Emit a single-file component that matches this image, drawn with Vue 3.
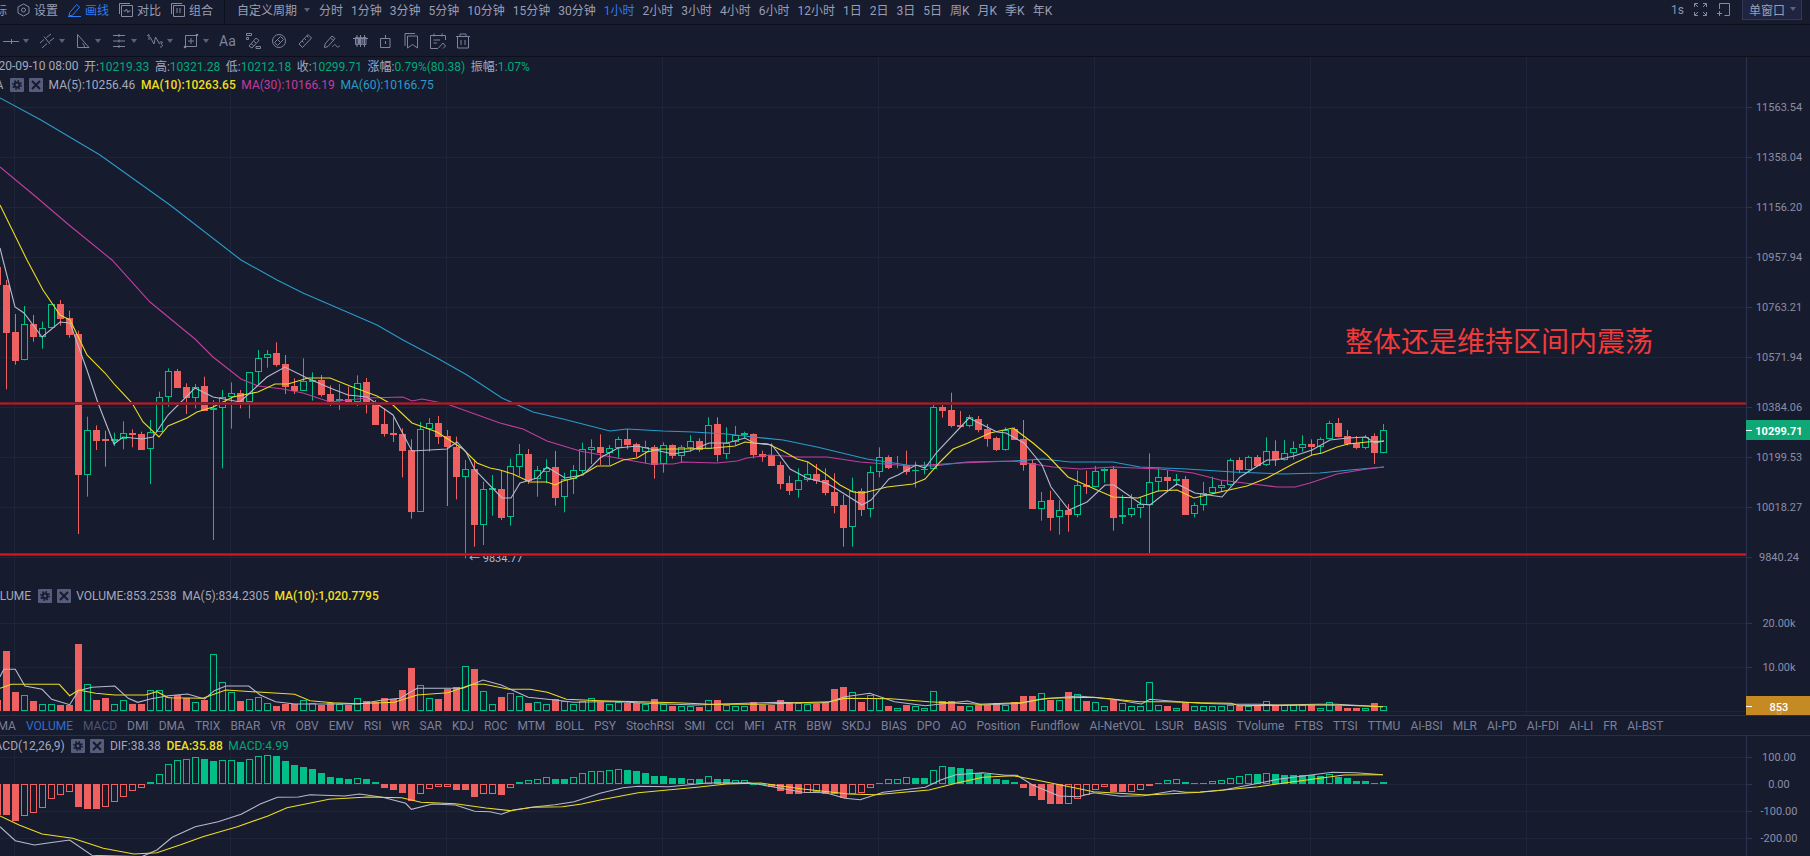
<script setup>
const periodList = ['分时', '1分钟', '3分钟', '5分钟', '10分钟', '15分钟', '30分钟', '1小时', '2小时', '3小时', '4小时', '6小时', '12小时', '1日', '2日', '3日', '5日', '周K', '月K', '季K', '年K'];
const indicatorList = ['MA', 'VOLUME', 'MACD', 'DMI', 'DMA', 'TRIX', 'BRAR', 'VR', 'OBV', 'EMV', 'RSI', 'WR', 'SAR', 'KDJ', 'ROC', 'MTM', 'BOLL', 'PSY', 'StochRSI', 'SMI', 'CCI', 'MFI', 'ATR', 'BBW', 'SKDJ', 'BIAS', 'DPO', 'AO', 'Position', 'Fundflow', 'AI-NetVOL', 'LSUR', 'BASIS', 'TVolume', 'FTBS', 'TTSI', 'TTMU', 'AI-BSI', 'MLR', 'AI-PD', 'AI-FDI', 'AI-LI', 'FR', 'AI-BST'];

const ohlc = [
  { label: '开', value: '10219.33' },
  { label: '高', value: '10321.28' },
  { label: '低', value: '10212.18' },
  { label: '收', value: '10299.71' },
  { label: '涨幅', value: '0.79%(80.38)' },
  { label: '振幅', value: '1.07%' },
];

const gridX = [14.5, 230.5, 446.5, 662.5, 878.5, 1094.5, 1310.5, 1526.5];
const priceTicks = [
  [107, '11563.54'], [157, '11358.04'], [207, '11156.20'], [257, '10957.94'], [307, '10763.21'],
  [357, '10571.94'], [407, '10384.06'], [457, '10199.53'], [507, '10018.27'], [557, '9840.24'],
];
const volumeTicks = [[623, '20.00k'], [667, '10.00k']];
const macdTicks = [[757, '100.00'], [784, '0.00'], [811, '-100.00'], [838, '-200.00']];

const barX = (i) => 6.5 + 9 * i;

// [kind, bodyTop, bodyBottom, wickTop, wickBottom], y read off the chart in 3x units
const candleGroups = [
  { from: -1, y0: 260, rows: [
    ['r',22,75,0,75],['r',75,218,60,388],['r',216,302,162,314],['g',193,301,138,301],['r',192,230,165,245],['g',205,230,185,266],
    ['g',133,205,133,205],['r',133,177,120,197],['r',175,224,152,233],['r',222,644,212,822],['g',511,644,470,710],['r',511,543,496,570],
    ['r',538,542,512,620],['f',537,543,518,558],['g',520,538,484,568],['r',520,524,508,562],['r',522,570,515,570],['g',515,568,480,672],
    ['g',412,515,395,515],['g',334,412,325,440],['r',333,384,327,384],['r',381,414,370,462],['g',380,413,372,445],['r',378,452,350,452],
    ['g',445,451,420,840],['g',410,445,390,625],['g',400,410,367,506],['r',400,425,390,445],['g',337,425,337,475],['g',295,337,270,375],
    ['g',281,295,270,323],['r',279,315,247,320],['r',312,380,285,402],['r',378,393,355,402],['g',364,392,295,392],['f',361,365,337,422],
    ['r',361,405,345,410],['r',402,425,376,438],['f',418,422,372,450],['r',417,428,380,430],['g',368,427,346,438],['r',366,426,354,460],
    ['r',425,494,420,494],['r',492,522,445,530],['r',519,524,472,546],['r',522,572,505,652],['r',570,755,538,776],['g',508,755,486,755],
    ['g',490,508,474,575],['r',489,530,468,552],['r',529,560,510,738],['r',560,650,530,718],
  ] },
  { from: 51, y0: 380, rows: [
    ['g',268,290,240,535],['r',268,434,238,500],['g',328,434,305,495],['f',323,329,285,407],['r',327,414,272,420],['g',259,412,236,437],
    ['g',223,260,192,288],['r',222,303,207,312],['g',271,298,258,350],['g',263,275,238,310],['r',261,353,213,377],['g',298,352,278,397],
    ['g',271,298,255,342],['g',208,272,188,280],['g',202,209,178,252],['r',201,219,163,255],['g',205,218,195,255],['g',178,205,170,235],
    ['r',177,195,148,208],['r',192,216,188,232],['g',202,215,182,250],['r',201,254,195,296],['g',196,252,187,278],['r',195,227,193,236],
    ['g',202,227,195,248],['g',184,203,166,215],['r',183,210,175,216],['g',134,208,112,208],['r',132,224,112,245],['g',188,223,142,237],
    ['g',164,186,138,195],['f',160,164,155,175],['r',162,224,160,235],['r',222,230,212,245],['r',226,257,190,257],['r',255,311,245,328],
    ['r',309,332,287,345],['g',301,331,265,353],['g',283,300,245,305],['r',282,303,252,312],['r',300,338,265,346],['r',336,377,280,400],
    ['r',375,443,345,500],['g',334,442,293,500],['r',334,389,325,408],['g',277,388,258,412],['g',232,277,202,292],['r',231,263,226,267],
    ['g',257,262,228,265],['r',255,275,212,284],['f',270,274,245,323],['f',267,271,245,283],['g',82,267,72,267],['r',81,92,68,113],
    ['r',90,137,38,142],['r',135,140,93,142],['g',112,139,105,142],['r',117,150,108,157],['r',148,176,132,200],['r',175,210,170,213],
    ['g',149,209,142,212],['r',148,180,142,180],['r',177,254,120,272],['r',250,386,240,386],['g',362,386,336,422],['r',360,413,332,452],
    ['g',391,412,360,464],['r',390,404,372,455],['g',316,404,272,412],['r',314,320,272,342],['g',274,320,258,322],['g',268,274,265,308],
    ['r',267,413,258,452],['g',405,412,345,432],['g',385,406,342,412],['g',373,385,352,414],['g',307,374,220,520],['g',292,307,262,335],
    ['r',291,303,272,332],['f',298,302,282,318],['r',297,405,288,405],['g',376,403,368,412],['g',338,376,306,392],['g',322,338,290,340],
    ['g',316,323,302,335],['g',241,316,235,318],['r',240,270,232,280],['g',232,269,227,272],['r',231,258,225,260],['g',214,256,172,258],
    ['r',213,241,181,258],['g',220,241,180,242],['g',205,220,184,238],['g',193,205,166,215],['r',192,200,178,225],['g',176,200,172,222],
    ['g',130,176,122,178],['r',129,170,114,172],['r',168,192,150,196],['r',190,204,168,208],['g',170,203,165,208],['r',168,218,160,252],
    ['g',151,218,132,220],
  ] },
];

const candles = candleGroups.flatMap(({ from, y0, rows }) =>
  rows.map(([kind, top, bottom, wickTop, wickBottom], i) => {
    const y1 = Math.round(y0 + top / 3);
    const y2 = Math.round(y0 + bottom / 3);
    return {
      id: from + i,
      kind,
      x: barX(from + i),
      y1,
      y2: Math.max(y2, y1 + 1),
      wickTop: y0 + wickTop / 3,
      wickBottom: y0 + wickBottom / 3,
    };
  }),
);

const ma60 = [[0,98],[41,120],[100,155],[170,205],[241,260],[277,280],[303,293],[347,312],[377,325],[403,340],[437,358],[467,375],[502,398],[533,412],[563,419],[610,431],[627,429],[663,431],[693,432],[727,434],[753,437],[783,440],[817,447],[867,459],[907,465],[933,466],[967,462],[1013,461],[1043,459],[1070,462],[1113,462],[1140,467],[1187,469],[1233,472],[1283,474],[1320,473],[1350,470],[1384,467]];
const ma30 = [[0,167],[35,196],[69,225],[112,260],[150,302],[195,339],[213,357],[241,379],[258,386],[283,389],[303,393],[330,402],[367,398],[403,397],[412,401],[422,399],[447,404],[500,423],[523,429],[547,441],[580,451],[617,458],[650,464],[673,464],[683,462],[717,463],[737,461],[747,458],[770,455],[797,457],[827,457],[860,462],[910,466],[960,463],[1013,461],[1053,467],[1080,469],[1113,467],[1160,469],[1193,473],[1220,480],[1253,484],[1277,487],[1295,487],[1310,483],[1337,474],[1367,469],[1384,467]];
const ma10 = [[0,205],[27,260],[43,290],[60,315],[70,320],[87,355],[105,373],[115,385],[132,403],[143,422],[159,437],[168,426],[187,418],[197,412],[213,407],[233,397],[258,392],[275,384],[288,384],[308,378],[330,378],[350,386],[377,396],[393,405],[412,423],[437,432],[463,449],[477,463],[490,468],[500,470],[513,474],[530,482],[547,482],[555,485],[563,481],[575,478],[587,472],[597,466],[610,466],[623,460],[637,458],[647,452],[660,449],[683,449],[713,448],[735,446],[745,442],[753,443],[768,444],[783,451],[797,459],[808,462],[827,475],[840,485],[853,492],[863,493],[887,487],[913,484],[925,479],[940,462],[953,449],[968,443],[990,433],[1013,428],[1033,443],[1047,455],[1068,477],[1097,490],[1113,497],[1138,498],[1158,491],[1177,490],[1194,498],[1220,492],[1247,486],[1267,478],[1293,464],[1312,455],[1322,453],[1337,447],[1348,444],[1367,442],[1384,441]];
const ma5 = [[0,248],[3,260],[15,307],[24,313],[42,337],[60,322],[70,323],[87,370],[98,403],[114,444],[123,437],[142,439],[153,437],[168,415],[195,388],[213,397],[240,402],[267,377],[285,367],[307,378],[330,388],[348,395],[367,397],[393,415],[412,451],[447,449],[457,442],[466,452],[475,470],[502,498],[511,498],[520,483],[537,478],[547,467],[565,478],[583,475],[600,458],[618,448],[637,446],[655,450],[673,454],[690,451],[709,443],[727,443],[745,438],[754,443],[772,445],[790,469],[807,478],[826,483],[835,488],[862,505],[871,500],[889,479],[898,475],[916,465],[925,468],[937,452],[969,418],[997,432],[1006,433],[1015,438],[1024,443],[1042,465],[1051,487],[1069,510],[1087,502],[1105,485],[1114,485],[1141,504],[1150,505],[1177,484],[1195,493],[1222,497],[1240,477],[1267,460],[1276,460],[1294,456],[1312,450],[1330,440],[1348,438],[1366,437],[1375,443],[1384,441]];

// pairs measured on crops of the chart: scale x, origin x, origin y
const crop = (pairs, sx, ox, oy) => pairs.map(([x, y]) => [ox + x / sx, oy + y / 3]);
const toPoints = (pairs) => pairs.map(([x, y]) => `${x.toFixed(1)},${y.toFixed(1)}`).join(' ');

const volumeWhite = [
  ...crop([[0,290],[10,268],[40,268],[65,318],[110,328],[135,358],[182,374],[205,332],[240,322],[300,318],[335,355],[360,367],[395,356],[440,347],[490,342],[535,357],[560,332],[590,318],[650,318],[680,345],[720,365],[770,372],[830,372],[940,372],[1000,360],[1045,355],[1090,325],[1170,325],[1210,325],[1262,300],[1310,315],[1380,352],[1450,360],[1500,367],[1568,365]], 2.613, 0, 580),
  ...crop([[50,185],[120,190],[250,195],[380,190],[470,187],[570,190],[600,185],[640,170],[705,160],[770,185],[850,197],[960,183],[1000,195],[1100,190],[1150,178],[1250,168],[1340,178],[1415,192],[1437,178],[1530,187],[1568,190]], 2.613, 600, 640),
  ...crop([[80,193],[150,193],[200,195],[300,193],[350,193],[470,200]], 2.57, 1200, 640),
];
const volumeYellow = [
  ...crop([[0,325],[30,313],[155,313],[182,347],[205,330],[250,340],[300,345],[380,345],[410,335],[440,353],[530,355],[590,330],[660,335],[770,343],[810,362],[870,368],[930,371],[1030,367],[1090,345],[1170,338],[1235,313],[1265,313],[1330,328],[1385,328],[1430,337],[1480,358],[1568,362]], 2.613, 0, 580),
  ...crop([[200,188],[290,193],[420,193],[520,188],[600,185],[640,175],[760,176],[860,185],[990,193],[1100,188],[1170,175],[1290,172],[1410,185],[1480,185],[1568,188]], 2.613, 600, 640),
  ...crop([[80,190],[100,197],[290,195],[370,196],[470,200]], 2.57, 1200, 640),
];
const macdWhite = [
  ...crop([[0,740],[40,782],[90,795],[130,788],[182,780],[240,826],[370,830],[410,810],[450,772],[510,740],[570,725],[630,703],[680,672],[725,652],[780,651],[810,644],[900,648],[940,642],[1000,652],[1060,670],[1075,688],[1130,672],[1190,675],[1240,694],[1280,695],[1310,703],[1340,690],[1400,680],[1450,674],[1500,665],[1568,640]], 2.613, 0, 580),
  ...crop([[60,443],[100,439],[180,440],[280,429],[390,428],[450,440],[530,457],[590,458],[640,475],[680,479],[740,457],[850,442],[890,420],[930,404],[1000,398],[1060,406],[1090,406],[1130,435],[1200,468],[1250,470],[1290,458],[1360,469],[1420,467],[1500,452],[1530,457],[1568,456]], 2.613, 600, 640),
  ...crop([[60,450],[150,430],[200,418],[320,400],[340,397],[400,398],[470,404]], 2.57, 1200, 640),
];
const macdYellow = [
  ...crop([[0,708],[50,735],[110,762],[190,775],[270,805],[350,822],[410,818],[470,795],[530,770],[620,740],[700,708],[750,683],[860,658],[960,651],[1050,653],[1100,667],[1190,671],[1270,684],[1335,692],[1390,682],[1470,680],[1520,672],[1568,660]], 2.613, 0, 580),
  ...crop([[100,458],[260,441],[330,432],[420,429],[530,447],[650,462],[720,464],[860,450],[930,430],[1000,412],[1080,407],[1140,420],[1290,455],[1430,465],[1568,457]], 2.613, 600, 640),
  ...crop([[150,440],[240,425],[370,405],[470,404]], 2.57, 1200, 640),
];

const lines = {
  ma60: toPoints(ma60), ma30: toPoints(ma30), ma10: toPoints(ma10), ma5: toPoints(ma5),
  volumeWhite: toPoints(volumeWhite), volumeYellow: toPoints(volumeYellow),
  macdWhite: toPoints(macdWhite), macdYellow: toPoints(macdYellow),
};

// R/G filled, r/g hollow, number is the far end of the bar on the crop
const parseBars = (text, from, y0) =>
  text.trim().split(/\s+/).map((cell, i) => ({
    id: from + i,
    kind: cell[0],
    end: y0 + Number(cell.slice(1)) / 3,
    x: barX(from + i),
  }));

const toRect = (bar, base) => {
  const y1 = Math.round(Math.min(bar.end, base));
  const y2 = Math.round(Math.max(bar.end, base));
  const hollow = bar.kind === 'r' || bar.kind === 'g';
  return {
    id: bar.id,
    cls: bar.kind === 'R' || bar.kind === 'r' ? 'bar-red' : 'bar-green',
    hollow,
    x: hollow ? bar.x - 3 : bar.x - 3.5,
    y: hollow ? y1 + 0.5 : y1,
    width: hollow ? 6 : 7,
    height: Math.max(hollow ? y2 - y1 - 1 : y2 - y1, 1),
  };
};

const volumeBars = [
  ...parseBars('R360 R213 R336 g346 R363 g373 g373 R375 R375 R192 g313 R360 R354 g371 g361 R372 R372 g331 g331 g352 R346 R355 g367 R360 g223 g307 g337 R363 g358 g352 g370 R378 R372 R372 g361 g368 R375 R369 g372 R375 g355 R364 R366 R354 R357 R330 R264 g316 g355 R357 R326 R321 g259 R267 g334 g371 R351 g340 g349 R369 g367 g373 R358 g364 g372 g362 g355', -1, 580),
  ...parseBars('R185 g193 g186 R188 R190 g193 R177 g193 R198 g199 g199 R200 g181 R181 g195 g199 g199 R186 R195 R195 R180 R188 g190 g193 R193 R186 R147 R141 g157 R186 g165 g175 R198 g203 R195 g199 g204 g154 R183 R183 R198 g198 R195 R195 R190 g195 R186 R168 R168 g160 R180 g180 R155 g163 R183 g187 g198 R180 g190 g198 g198 g127 g195 R198 g203 R188 g198 g198 g198 g198 g195 R197 g197 R197 g184 R196 g196 g196 g196 R196 g203 g187 R197 R204 R204 g203 R190 g198', 66, 640),
].map((bar) => toRect(bar, 711));

const macdBars = [
  ...parseBars('R704 R705 R722 r708 r700 r685 r658 r645 r635 R680 R686 R686 r680 r667 r650 r634 r625 G605 g583 g552 g541 g537 g532 G538 G543 g541 g541 G546 g538 g529 g526 G528 G543 G555 G561 G567 G579 G590 G595 G597 g594 G597 G606 R623 R629 R638 R662 r643 r628 r622 r620 R629 R629 R650 r642 r642 R644 r624 G607 g601 g596 g592 G597 G598 g592 g580 g573', -1, 580),
  ...parseBars('g392 g390 g388 G391 G394 G400 G408 G408 G415 G415 g416 G418 g409 G418 G418 g419 g419 G431 G435 R441 R453 R462 R462 r458 r456 R462 R462 R473 r461 r460 r443 G429 g418 g416 g412 G415 G414 g391 g379 G381 G384 G387 G400 G403 G417 G420 G427 R444 R467 R480 R491 R491 r491 r476 r465 r451 r440 R456 R456 r455 r449 R437 G428 g421 g418 G427 G429 G428 g424 g421 g413 g409 g403 G402 g400 G403 G406 G406 G406 G406 G408 g403 G410 G414 G423 G423 G429 G427', 66, 640),
].map((bar) => toRect(bar, 784));
</script>

<template>
  <div class="terminal">
    <header class="top-bar">
      <div class="tools">
        <span class="tool-label">指标</span>
        <span class="tool">
          <svg class="tool-icon" width="13" height="14" viewBox="0 0 13 14"><path d="M6.5 1 L12 4 V10 L6.5 13 L1 10 V4 Z" /><circle cx="6.5" cy="7" r="2" /></svg>
          设置
        </span>
        <span class="tool tool-active">
          <svg class="tool-icon" width="13" height="14" viewBox="0 0 13 14"><path d="M1 13 L1.6 9.6 L8.6 1.6 L11.6 4.2 L4.6 12.2 Z M0 13.5 H13" /></svg>
          画线
        </span>
        <span class="tool">
          <svg class="tool-icon" width="14" height="14" viewBox="0 0 14 14"><path d="M.5 11 V.5 H11 M2.5 2.5 H13.5 V13.5 H2.5 Z M4.5 8 H6.5 L7.5 6 L8.8 9.5 L9.8 8 H11.5" /></svg>
          对比
        </span>
        <span class="tool">
          <svg class="tool-icon" width="14" height="14" viewBox="0 0 14 14"><path d="M.5 11 V.5 H11 M2.5 2.5 H13.5 V13.5 H2.5 Z M6 5 V10 M9 5 V10" /></svg>
          组合
        </span>
      </div>
      <div class="periods">
        <span class="period-custom">自定义周期<i class="caret"></i></span>
        <span v-for="period in periodList" :key="period" class="period" :class="{ 'period-active': period === '1小时' }">{{ period }}</span>
      </div>
      <div class="top-right">
        <span class="seconds">1s</span>
        <svg class="tool-icon" width="13" height="13" viewBox="0 0 13 13"><path d="M.5 4 V.5 H4 M9 .5 H12.5 V4 M12.5 9 V12.5 H9 M4 12.5 H.5 V9 M1 1 L4 4 M12 1 L9 4 M12 12 L9 9 M1 12 L4 9" /></svg>
        <svg class="tool-icon" width="13" height="13" viewBox="0 0 13 13"><path d="M2.5 6 V.5 H12.5 V12.5 H7.5 M0 10.5 H5 M2.5 8 V13" /></svg>
        <button class="window-btn">单窗口<i class="caret"></i></button>
      </div>
    </header>

    <div class="draw-bar">
      <span class="draw-group">
        <svg class="draw-icon" width="16" height="16" viewBox="0 0 16 16"><path d="M0 8.5 H16 M8.5 6 V11" /></svg>
        <i class="caret"></i>
      </span>
      <span class="draw-group">
        <svg class="draw-icon" width="16" height="16" viewBox="0 0 16 16"><path d="M1 10 L5 6.5 M7.5 4.5 L12 1 M3 15 L8 10.5 M10.5 8.5 L15 5 M5 3.5 L11 11" /></svg>
        <i class="caret"></i>
      </span>
      <span class="draw-group">
        <svg class="draw-icon" width="16" height="16" viewBox="0 0 16 16"><path d="M2.5 1.5 V14.5 H14 Z M9.5 14.5 C9.5 12.5 9 11.5 7.5 10" /></svg>
        <i class="caret"></i>
      </span>
      <span class="draw-group">
        <svg class="draw-icon" width="16" height="16" viewBox="0 0 16 16"><path d="M2 2.5 H14 M2 8 H14 M2 13.5 H14 M8 1 V4 M8 6.5 V9.5 M8 12 V15" /></svg>
        <i class="caret"></i>
      </span>
      <span class="draw-group">
        <svg class="draw-icon" width="16" height="16" viewBox="0 0 16 16"><path d="M0 3 L2 1.5 V7 M3 4 L7 11 L8.5 4 L12.5 11 M12.5 9 H15.5 L14 11 C16 11 16 14.5 13 14" /></svg>
        <i class="caret"></i>
      </span>
      <span class="draw-group">
        <svg class="draw-icon" width="16" height="16" viewBox="0 0 16 16"><path d="M2.5 2.5 H13.5 V13.5 H2.5 Z M5 8 H11 M8 5 V11" /><circle class="node" cx="14" cy="2" r="1.3" /><circle class="node" cx="2" cy="14" r="1.3" /></svg>
        <i class="caret"></i>
      </span>
      <span class="draw-text">Aa</span>
      <svg class="draw-icon" width="16" height="16" viewBox="0 0 16 16"><path d="M1.5 .5 H6.5 V2.5 H1.5 Z M1.5 4.5 H3.5 V6.5 H1.5 Z M4 13 L11 5 L14 7.5 L7 15 Z M6 10.5 L8.5 12.5 M8.5 8 L11 10 M11 13.5 H15.5 V15.5 H11 Z" /></svg>
      <svg class="draw-icon" width="16" height="16" viewBox="0 0 16 16"><circle cx="8" cy="8" r="6.5" /><path d="M3.5 9.5 L9.5 3.5 L12.5 6.5 L6.5 12.5 Z M6.5 6.5 L9.5 9.5" /></svg>
      <svg class="draw-icon" width="16" height="16" viewBox="0 0 16 16"><path d="M2 11 L11 1.5 L14.5 5 L5.5 14.5 Z M5 8 L6.5 9.5 M7.5 5.5 L9 7 M10 3 L11.5 4.5" /></svg>
      <svg class="draw-icon" width="20" height="16" viewBox="0 0 20 16"><path d="M1.5 14.5 L2 11 L9 3 L12 5.5 L5 13.5 Z M7.5 5 L10.5 7.5 M9 14 C11 12 12 10.5 13 12.5 C14 14.5 15 14.5 17 12.5" /></svg>
      <svg class="draw-icon" width="15" height="16" viewBox="0 0 15 16"><path d="M2.5 4.5 H5.5 V11.5 H2.5 Z M6.5 4.5 H9 V11.5 H6.5 Z M10 4.5 H13 V11.5 H10 Z M4 2 V14 M7.5 2 V14 M11.5 2 V14 M0 5.5 H15" /></svg>
      <svg class="draw-icon" width="14" height="16" viewBox="0 0 14 16"><path d="M2.5 5.5 H12 V14.5 H2.5 Z M7.5 2 V5 M7.5 8 V11" /></svg>
      <svg class="draw-icon" width="18" height="16" viewBox="0 0 18 16"><path d="M3 13 V.5 H13 M5.5 3 H15.5 V15 L10.5 11.5 L5.5 15 Z" /></svg>
      <svg class="draw-icon" width="16" height="16" viewBox="0 0 16 16"><path d="M.5 2.5 H15.5 V7 M.5 2.5 V15.5 H8 M4 .5 V3.5 M12 .5 V3.5 M3.5 7 H10 M3.5 10 H7 M8.5 15 L13 10 L15.5 13 L13 15.5" /></svg>
      <svg class="draw-icon" width="14" height="16" viewBox="0 0 14 16"><path d="M0 3.5 H14 M4 3.5 V1 H10 V3.5 M1.5 3.5 V15 H12.5 V3.5 M5 7 V12 M9 7 V12" /></svg>
    </div>

    <section class="pane pane-main">
      <svg class="chart" width="1810" height="529" viewBox="0 57 1810 529">
        <line v-for="x in gridX" :key="x" class="grid" :x1="x" :x2="x" y1="57" y2="586" />
        <line v-for="tick in priceTicks" :key="tick[0]" class="grid" x1="0" x2="1746" :y1="tick[0] + 0.5" :y2="tick[0] + 0.5" />

        <g v-for="candle in candles" :key="candle.id">
          <line :class="candle.kind === 'r' ? 'wick-red' : 'wick-green'" :x1="candle.x" :x2="candle.x" :y1="candle.wickTop" :y2="candle.wickBottom" />
          <rect v-if="candle.kind === 'g'" class="bar-green hollow" :x="candle.x - 3" :y="candle.y1 + 0.5" width="6" :height="candle.y2 - candle.y1 - 1" />
          <rect v-else :class="candle.kind === 'r' ? 'bar-red' : 'bar-green'" :x="candle.x - 3.5" :y="candle.y1" width="7" :height="candle.y2 - candle.y1" />
        </g>

        <polyline class="ma ma60" :points="lines.ma60" />
        <polyline class="ma ma30" :points="lines.ma30" />
        <polyline class="ma ma10" :points="lines.ma10" />
        <polyline class="ma ma5" :points="lines.ma5" />

        <text class="low-mark" x="469" y="562">← 9834.77</text>

        <line class="level-back" x1="0" x2="1746" y1="403.5" y2="403.5" />
        <line class="level-top" x1="0" x2="1746" y1="403.5" y2="403.5" />
        <line class="level-back" x1="0" x2="1746" y1="554.5" y2="554.5" />
        <line class="level-low" x1="0" x2="1746" y1="554.5" y2="554.5" />

        <text class="note" x="1345" y="352">整体还是维持区间内震荡</text>

        <line class="axis" x1="1746.5" x2="1746.5" y1="57" y2="586" />
        <g v-for="tick in priceTicks" :key="tick[1]">
          <line class="axis" x1="1746" x2="1752" :y1="tick[0] + 0.5" :y2="tick[0] + 0.5" />
          <text class="axis-label" x="1779" :y="tick[0] + 4">{{ tick[1] }}</text>
        </g>
        <rect class="tag-green" x="1746" y="420" width="64" height="20" />
        <line class="tag-tick" x1="1746" x2="1752" y1="430.5" y2="430.5" />
        <text class="tag-label tag-bold" x="1779" y="434.5">10299.71</text>
      </svg>
      <div class="legend">
        <div class="legend-row">
          <span>2020-09-10 08:00</span>
          <span v-for="item in ohlc" :key="item.label">{{ item.label }}:<b class="value">{{ item.value }}</b></span>
        </div>
        <div class="legend-row">
          <span>MA</span>
          <span class="legend-btns">
            <svg width="14" height="14" viewBox="0 0 14 14"><rect class="btn-back" width="14" height="14" rx="1" /><circle class="btn-teeth" cx="7" cy="7" r="4.2" /><circle class="btn-mark" cx="7" cy="7" r="3.4" /><circle class="btn-back" cx="7" cy="7" r="1.4" /></svg>
            <svg width="14" height="14" viewBox="0 0 14 14"><rect class="btn-back" width="14" height="14" rx="1" /><path class="btn-cross" d="M3 3 L11 11 M11 3 L3 11" /></svg>
          </span>
          <span>MA(5):10256.46</span>
          <span class="c-yellow">MA(10):10263.65</span>
          <span class="c-magenta">MA(30):10166.19</span>
          <span class="c-blue">MA(60):10166.75</span>
        </div>
      </div>
    </section>

    <section class="pane pane-volume">
      <svg class="chart" width="1810" height="129" viewBox="0 586 1810 129">
        <line v-for="x in gridX" :key="x" class="grid" :x1="x" :x2="x" y1="586" y2="715" />
        <line v-for="y in [623.5, 667.5, 711.5]" :key="y" class="grid" x1="0" x2="1746" :y1="y" :y2="y" />
        <rect v-for="bar in volumeBars" :key="bar.id" :class="[bar.cls, { hollow: bar.hollow }]" :x="bar.x" :y="bar.y" :width="bar.width" :height="bar.height" />
        <polyline class="ma ma5" :points="lines.volumeWhite" />
        <polyline class="ma ma10" :points="lines.volumeYellow" />
        <line class="axis" x1="1746.5" x2="1746.5" y1="586" y2="715" />
        <g v-for="tick in volumeTicks" :key="tick[1]">
          <line class="axis" x1="1746" x2="1752" :y1="tick[0] + 0.5" :y2="tick[0] + 0.5" />
          <text class="axis-label" x="1779" :y="tick[0] + 4">{{ tick[1] }}</text>
        </g>
        <rect class="tag-gold" x="1746" y="696" width="64" height="20" />
        <line class="tag-tick" x1="1746" x2="1752" y1="706.5" y2="706.5" />
        <text class="tag-zero" x="1779" y="715">0</text>
        <text class="tag-label" x="1779" y="710.5">853</text>
      </svg>
      <div class="legend">
        <div class="legend-row legend-single">
          <span>VOLUME</span>
          <span class="legend-btns">
            <svg width="14" height="14" viewBox="0 0 14 14"><rect class="btn-back" width="14" height="14" rx="1" /><circle class="btn-teeth" cx="7" cy="7" r="4.2" /><circle class="btn-mark" cx="7" cy="7" r="3.4" /><circle class="btn-back" cx="7" cy="7" r="1.4" /></svg>
            <svg width="14" height="14" viewBox="0 0 14 14"><rect class="btn-back" width="14" height="14" rx="1" /><path class="btn-cross" d="M3 3 L11 11 M11 3 L3 11" /></svg>
          </span>
          <span>VOLUME:853.2538</span>
          <span>MA(5):834.2305</span>
          <span class="c-yellow">MA(10):1,020.7795</span>
        </div>
      </div>
    </section>

    <nav class="indicators">
      <span v-for="name in indicatorList" :key="name" :class="{ 'ind-on': name === 'VOLUME', 'ind-off': name === 'MACD' }">{{ name }}</span>
    </nav>

    <section class="pane pane-macd">
      <svg class="chart" width="1810" height="120" viewBox="0 736 1810 120">
        <line v-for="x in gridX" :key="x" class="grid" :x1="x" :x2="x" y1="736" y2="856" />
        <line v-for="tick in macdTicks" :key="tick[0]" class="grid" x1="0" x2="1746" :y1="tick[0] + 0.5" :y2="tick[0] + 0.5" />
        <rect v-for="bar in macdBars" :key="bar.id" :class="[bar.cls, { hollow: bar.hollow }]" :x="bar.x" :y="bar.y" :width="bar.width" :height="bar.height" />
        <polyline class="ma ma5" :points="lines.macdWhite" />
        <polyline class="ma ma10" :points="lines.macdYellow" />
        <line class="axis" x1="1746.5" x2="1746.5" y1="736" y2="856" />
        <g v-for="tick in macdTicks" :key="tick[1]">
          <line class="axis" x1="1746" x2="1752" :y1="tick[0] + 0.5" :y2="tick[0] + 0.5" />
          <text class="axis-label" x="1779" :y="tick[0] + 4">{{ tick[1] }}</text>
        </g>
      </svg>
      <div class="legend">
        <div class="legend-row legend-single">
          <span>MACD(12,26,9)</span>
          <span class="legend-btns">
            <svg width="14" height="14" viewBox="0 0 14 14"><rect class="btn-back" width="14" height="14" rx="1" /><circle class="btn-teeth" cx="7" cy="7" r="4.2" /><circle class="btn-mark" cx="7" cy="7" r="3.4" /><circle class="btn-back" cx="7" cy="7" r="1.4" /></svg>
            <svg width="14" height="14" viewBox="0 0 14 14"><rect class="btn-back" width="14" height="14" rx="1" /><path class="btn-cross" d="M3 3 L11 11 M11 3 L3 11" /></svg>
          </span>
          <span>DIF:38.38</span>
          <span class="c-yellow">DEA:35.88</span>
          <span class="c-green">MACD:4.99</span>
        </div>
      </div>
    </section>
  </div>
</template>

<style>
html, body {
  margin: 0;
  background: #171b2e;
  overflow: hidden;
}
</style>

<style scoped>
.terminal {
  width: 1810px;
  height: 856px;
  overflow: hidden;
  display: flex;
  flex-direction: column;
  background: #171b2e;
  color: #9a9eb4;
  font-family: Roboto, "Noto Sans CJK SC", sans-serif;
  font-size: 12px;
}

.top-bar {
  display: flex;
  align-items: center;
  height: 19px;
  padding-bottom: 5px;
  flex: none;
  border-bottom: 1px solid #0d101c;
  white-space: nowrap;
}
.tools {
  display: flex;
  align-items: center;
  align-self: flex-start;
  gap: 10px;
  margin-left: -17px;
  box-sizing: border-box;
  width: 242px;
  height: 24px;
  padding-bottom: 5px;
  border-right: 1px solid #0d101c;
  flex: none;
}
.tool {
  display: flex;
  align-items: center;
  gap: 4px;
}
.tool-active {
  color: #2e7cf6;
}
.tool-icon {
  fill: none;
  stroke: #878ba2;
  stroke-width: 1;
  flex: none;
}
.tool-active .tool-icon {
  stroke: #2e7cf6;
}
.periods {
  display: flex;
  align-items: center;
  gap: 8px;
  margin-left: 12px;
}
.period-custom {
  display: flex;
  align-items: center;
  gap: 7px;
  margin-right: 1px;
}
.period-active {
  color: #2e7cf6;
}
.caret {
  display: block;
  width: 0;
  height: 0;
  border-left: 3.5px solid transparent;
  border-right: 3.5px solid transparent;
  border-top: 4px solid #5d6280;
}
.top-right {
  display: flex;
  align-items: center;
  gap: 10px;
  margin-left: auto;
  margin-right: 8px;
}
.seconds {
  color: #8d93ad;
}
.window-btn {
  display: flex;
  align-items: center;
  gap: 5px;
  width: 60px;
  height: 20px;
  margin: 0 0 0 2px;
  padding: 0 0 0 6px;
  background: #1f2540;
  border: 1px solid #313858;
  border-top: 0;
  color: #9a9eb4;
  font: inherit;
}

.draw-bar {
  display: flex;
  align-items: center;
  gap: 10px;
  height: 31px;
  flex: none;
  padding-left: 3px;
  border-bottom: 1px solid #0d101c;
}
.draw-group {
  display: flex;
  align-items: center;
  gap: 4px;
}
.draw-icon {
  fill: none;
  stroke: #7f839c;
  stroke-width: 1;
  flex: none;
}
.draw-icon .node {
  fill: #7f839c;
  stroke: none;
}
.draw-text {
  font-size: 14px;
  color: #7f839c;
  margin-right: -1px;
}

.pane {
  position: relative;
  flex: none;
  overflow: hidden;
}
.pane-main {
  height: 529px;
}
.pane-volume {
  height: 129px;
}
.pane-macd {
  height: 120px;
}
.chart {
  display: block;
}
.grid {
  stroke: #1f2438;
  stroke-width: 1;
}
.wick-red {
  stroke: #ef6060;
  stroke-width: 1;
}
.wick-green {
  stroke: #00c087;
  stroke-width: 1;
}
.bar-red {
  fill: #ef6060;
}
.bar-green {
  fill: #00c087;
}
.bar-red.hollow {
  fill: #171b2e;
  stroke: #ef6060;
  stroke-width: 1;
}
.bar-green.hollow {
  fill: #171b2e;
  stroke: #00c087;
  stroke-width: 1;
}
.ma {
  fill: none;
  stroke-width: 1.1;
}
.ma5 {
  stroke: #b6bacd;
}
.ma10 {
  stroke: #ecdc22;
}
.ma30 {
  stroke: #c23d9e;
}
.ma60 {
  stroke: #2a9bc9;
}
.level-back {
  stroke: #7d1a2a;
  stroke-width: 3;
}
.level-top {
  stroke: #ad1c2a;
  stroke-width: 1.2;
}
.level-low {
  stroke: #d8141f;
  stroke-width: 1.6;
}
.note {
  fill: #f13a3a;
  font-size: 28px;
}
.low-mark {
  fill: #b6bacd;
  font-size: 11px;
}
.axis {
  stroke: #2c3252;
  stroke-width: 1;
}
.axis-label {
  fill: #8a8ea6;
  font-size: 11px;
  text-anchor: middle;
}
.tag-green {
  fill: #0fa776;
}
.tag-gold {
  fill: #c68a25;
}
.tag-tick {
  stroke: #ffffff;
  stroke-width: 1;
}
.tag-label {
  fill: #ffffff;
  font-size: 11px;
  font-weight: 500;
  text-anchor: middle;
}
.tag-bold {
  font-weight: 700;
}
.tag-zero {
  fill: #d9a85c;
  font-size: 11px;
  text-anchor: middle;
}

.legend {
  position: absolute;
  top: -1px;
  left: -15px;
}
.legend-row {
  display: flex;
  align-items: center;
  gap: 5.6px;
  height: 19px;
  white-space: nowrap;
  color: #a4a8bd;
}
.legend-single {
  height: 20px;
  margin-left: -1px;
  margin-top: 1px;
}
.value {
  font-weight: 400;
  color: #00a97a;
}
.legend-btns {
  display: flex;
  gap: 5px;
  margin-left: 1px;
}
.legend-btns svg {
  display: block;
}
.btn-back {
  fill: #565c7c;
}
.btn-mark {
  fill: #171b2e;
}
.btn-teeth {
  fill: none;
  stroke: #171b2e;
  stroke-width: 1.6;
  stroke-dasharray: 1.6 1.7;
}
.btn-cross {
  stroke: #171b2e;
  stroke-width: 2;
}
.c-yellow {
  color: #efdf22;
  font-weight: 500;
}
.c-magenta {
  color: #c23d9e;
}
.c-blue {
  color: #2a9bc9;
}
.c-green {
  color: #00a97a;
}

.indicators {
  display: flex;
  align-items: center;
  gap: 10px;
  height: 19px;
  flex: none;
  margin-left: -2.5px;
  border-top: 1px solid #2a2f48;
  border-bottom: 1px solid #2a2f48;
  color: #7b7f98;
  white-space: nowrap;
}
.ind-on {
  color: #2d6fd2;
}
.ind-off {
  color: #4f5470;
}
</style>
